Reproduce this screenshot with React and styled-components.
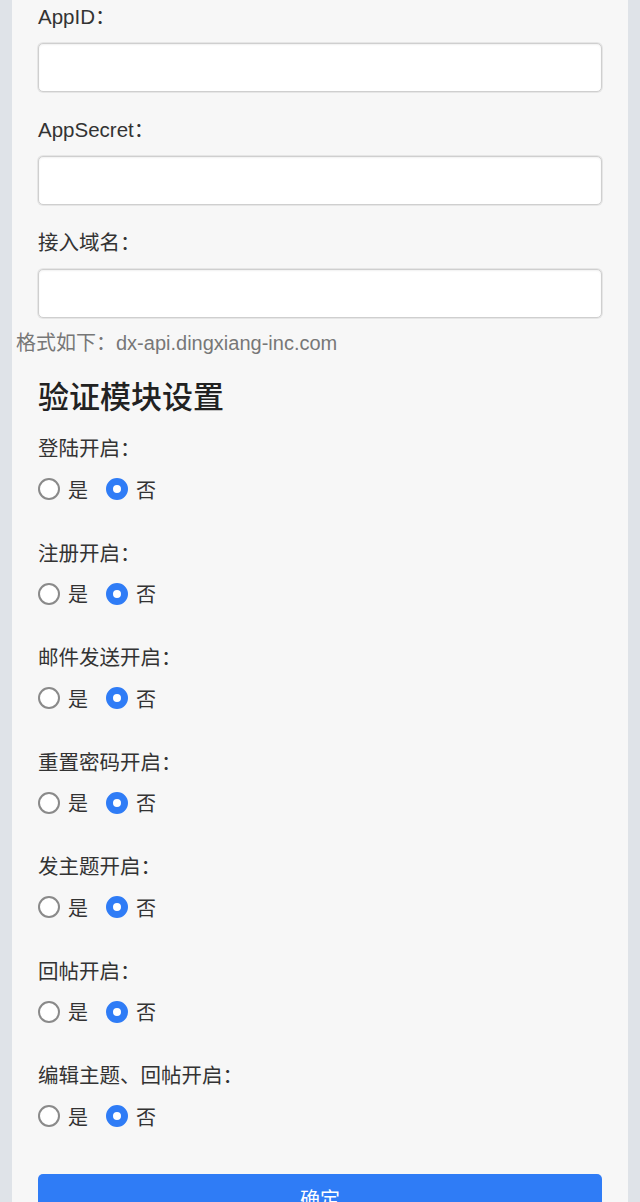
import React from "react";
import styled, {createGlobalStyle} from "styled-components";

const GlobalStyle = createGlobalStyle`
	html, body {
		margin: 0;
		padding: 0;
		background: #dfe3e8;
	}
	body {
		font-family: "Liberation Sans", "Noto Sans CJK SC", sans-serif;
		color: #333;
	}
`;

const fields = ["AppID：", "AppSecret：", "接入域名："];

const switches = [
	"登陆开启：",
	"注册开启：",
	"邮件发送开启：",
	"重置密码开启：",
	"发主题开启：",
	"回帖开启：",
	"编辑主题、回帖开启：",
];

const App = () => {
	return (
		<>
			<GlobalStyle />
			<Panel>
				<Section>
					{fields.map((f) => (
						<Field key={f}>
							<Label>{f}</Label>
							<Input type="text" />
						</Field>
					))}
				</Section>
				<Hint>格式如下：dx-api.dingxiang-inc.com</Hint>
				<Section>
					<Title>验证模块设置</Title>
					{switches.map((s, i) => (
						<Group key={s}>
							<Label $tight>{s}</Label>
							<RadioRow>
								<Choice>
									<Radio type="radio" name={"g" + i} />
									<span>是</span>
								</Choice>
								<Choice>
									<Radio type="radio" name={"g" + i} defaultChecked />
									<span>否</span>
								</Choice>
							</RadioRow>
						</Group>
					))}
					<Button>确定</Button>
				</Section>
			</Panel>
		</>
	);
};

export default App;

const Panel = styled.div`
	margin: 0 12px;
	padding: 4px 4px 40px;
	background: #f7f7f7;
	min-height: 1202px;
	box-sizing: border-box;
`;

const Section = styled.div`
	padding: 0 22px;
`;

const Field = styled.div`
	margin-bottom: 25px;
	&:last-child {
		margin-bottom: 0;
	}
`;

const Label = styled.div`
	font-size: 20.5px;
	line-height: 26px;
	margin-bottom: ${(p) => (p.$tight ? "12px" : "13px")};
	color: #333;
`;

const Input = styled.input`
	display: block;
	width: 100%;
	height: 49px;
	box-sizing: border-box;
	border: 1px solid #cfcfcf;
	border-radius: 5px;
	background: #fff;
	box-shadow: inset 0 1px 2px rgba(0, 0, 0, 0.06), 0 0 0 1px #e6e6e6;
	outline: none;
	font-size: 18px;
	padding: 0 12px;
`;

const Hint = styled.div`
	margin-top: 12px;
	font-size: 20px;
	line-height: 26px;
	color: #777;
`;

const Title = styled.h2`
	margin: 22px 0 18px;
	font-size: 31px;
	line-height: 40px;
	font-weight: 500;
	color: #222;
`;

const Group = styled.div`
	margin-bottom: 36.5px;
`;

const RadioRow = styled.div`
	display: flex;
	align-items: center;
	gap: 18px;
	height: 30px;
`;

const Choice = styled.label`
	display: flex;
	align-items: center;
	gap: 8px;
	font-size: 20px;
	color: #333;
`;

const Radio = styled.input`
	appearance: none;
	margin: 0;
	width: 22px;
	height: 22px;
	border-radius: 50%;
	border: 2px solid #8a8a8a;
	background: #fff;
	box-sizing: border-box;
	&:checked {
		border: 7px solid #2f7cf6;
	}
`;

const Button = styled.button`
	display: block;
	width: 100%;
	height: 48px;
	margin-top: 43px;
	border: none;
	border-radius: 5px;
	background: #2f7cf6;
	color: #fff;
	font-family: inherit;
	font-size: 20px;
`;
